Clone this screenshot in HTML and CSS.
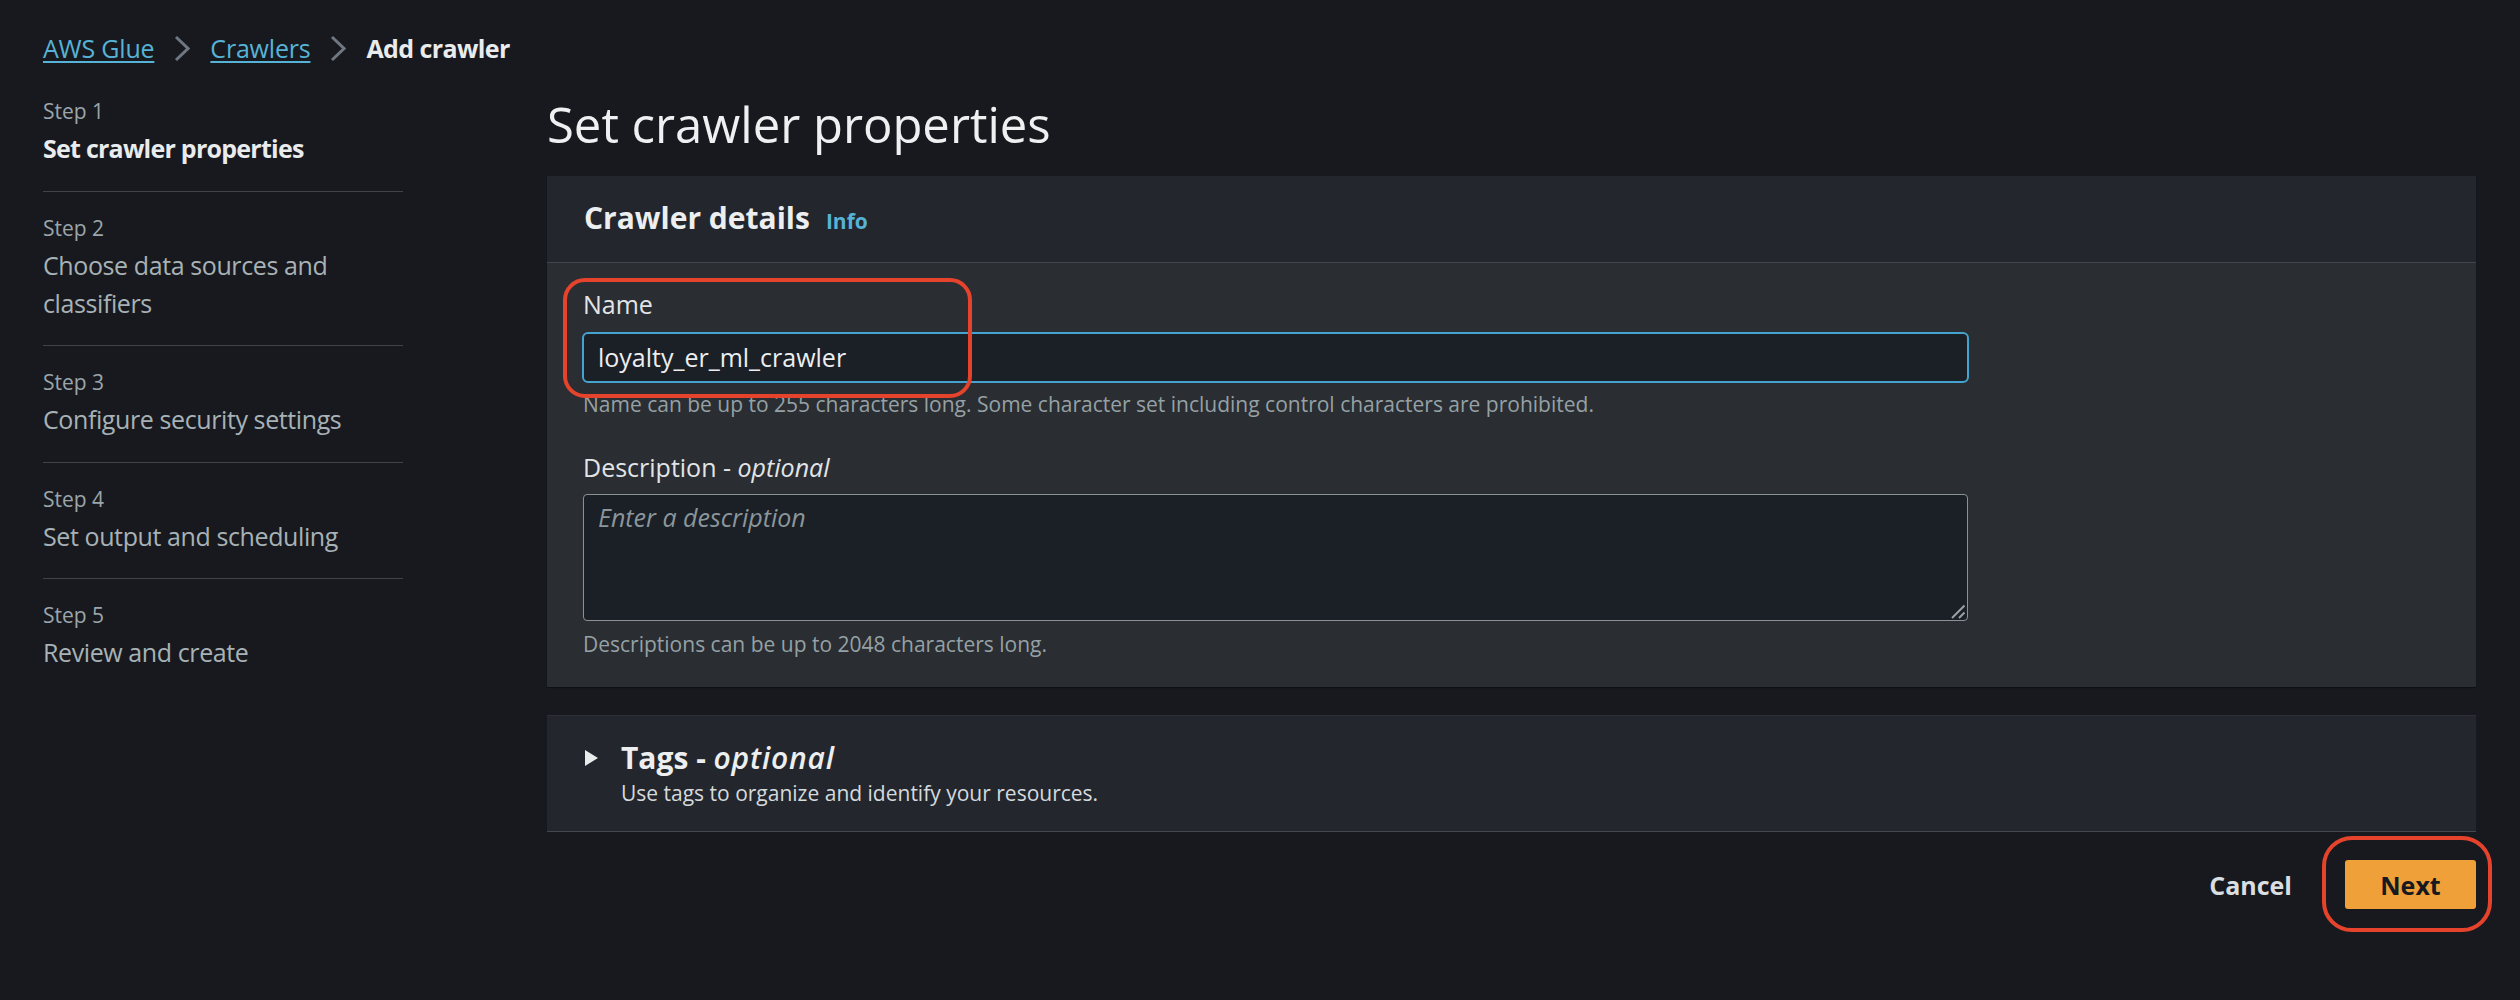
FILE: index.html
```html
<!DOCTYPE html>
<html lang="en">
<head>
<meta charset="utf-8">
<title>Add crawler - AWS Glue</title>
<link rel="stylesheet" href="styles.css">
</head>
<body>
<div class="page">
  <nav class="breadcrumbs">
    <a class="crumb-link" href="#">AWS Glue</a>
    <svg class="chev" width="16" height="27" viewBox="0 0 16 27"><polyline points="2,2 14,13.5 2,25" fill="none" stroke="#6f7782" stroke-width="3"/></svg>
    <a class="crumb-link" href="#">Crawlers</a>
    <svg class="chev" width="16" height="27" viewBox="0 0 16 27"><polyline points="2,2 14,13.5 2,25" fill="none" stroke="#6f7782" stroke-width="3"/></svg>
    <span class="crumb-current">Add crawler</span>
  </nav>

  <div class="layout">
    <aside class="steps">
      <div class="step">
        <div class="step-label">Step 1</div>
        <div class="step-title active">Set crawler properties</div>
      </div>
      <div class="step">
        <div class="step-label">Step 2</div>
        <div class="step-title">Choose data sources and<br>classifiers</div>
      </div>
      <div class="step">
        <div class="step-label">Step 3</div>
        <div class="step-title">Configure security settings</div>
      </div>
      <div class="step">
        <div class="step-label">Step 4</div>
        <div class="step-title">Set output and scheduling</div>
      </div>
      <div class="step last">
        <div class="step-label">Step 5</div>
        <div class="step-title">Review and create</div>
      </div>
    </aside>

    <main class="content">
      <h1 class="page-title">Set crawler properties</h1>

      <section class="panel details">
        <header class="panel-header">
          <h2 class="panel-title">Crawler details</h2>
          <a class="info-link" href="#">Info</a>
        </header>
        <div class="panel-body">
          <div class="field">
            <div class="field-label">Name</div>
            <div class="text-input">loyalty_er_ml_crawler</div>
            <div class="hint">Name can be up to 255 characters long. Some character set including control characters are prohibited.</div>
          </div>
          <div class="field desc-field">
            <div class="field-label">Description - <em>optional</em></div>
            <div class="text-area">
              <span class="placeholder">Enter a description</span>
              <svg class="resize-grip" width="16" height="16" viewBox="0 0 16 16"><line x1="2" y1="15" x2="14.5" y2="2.5" stroke="#9ba1a6" stroke-width="2"/><line x1="9" y1="15" x2="14.5" y2="9.5" stroke="#9ba1a6" stroke-width="2"/></svg>
            </div>
            <div class="hint">Descriptions can be up to 2048 characters long.</div>
          </div>
          <div class="annot annot-name"></div>
        </div>
      </section>

      <section class="panel tags">
        <svg class="caret" width="13" height="16" viewBox="0 0 13 16"><polygon points="0,0 13,8 0,16" fill="#e9ebed"/></svg>
        <div class="tags-text">
          <h2 class="panel-title tags-title">Tags - <em>optional</em></h2>
          <div class="tags-desc">Use tags to organize and identify your resources.</div>
        </div>
      </section>

      <div class="actions">
        <button class="btn-link" type="button">Cancel</button>
        <div class="next-wrap">
          <button class="btn-primary" type="button">Next</button>
          <div class="annot annot-next"></div>
        </div>
      </div>
    </main>
  </div>
</div>
</body>
</html>
```

FILE: styles.css
```css
* { box-sizing: border-box; }

html, body {
  margin: 0;
  padding: 0;
  background: #18191e;
}

body {
  font-family: "Open Sans", "Noto Sans", "Liberation Sans", sans-serif;
  color: #e9ebed;
}

.page {
  padding: 30px 44px 0 43px;
  min-height: 1000px;
}

/* Breadcrumbs */
.breadcrumbs {
  display: flex;
  align-items: center;
  height: 36px;
  font-size: 25px;
  line-height: 36px;
  letter-spacing: -0.2px;
}

.crumb-link {
  color: #56b3d6;
  text-decoration: underline;
  text-underline-offset: 3px;
  text-decoration-thickness: 2px;
}

.chev {
  margin: 0 20px;
  flex: none;
}

.crumb-current {
  font-weight: 700;
  letter-spacing: -0.6px;
  color: #e9ebed;
}

/* Layout */
.layout {
  display: grid;
  grid-template-columns: 360px 1fr;
  column-gap: 144px;
  margin-top: 30px;
}

/* Steps sidebar */
.step {
  padding: 21px 0 23.5px;
  border-bottom: 1px solid #3f434a;
}

.step:first-child { padding-top: 0; }
.step.last { border-bottom: none; }

.step-label {
  font-size: 21px;
  line-height: 30px;
  color: #9aa6aa;
}

.step-title {
  margin-top: 3px;
  font-size: 25px;
  line-height: 38px;
  letter-spacing: -0.4px;
  color: #a7b2b6;
}

.step-title.active {
  font-weight: 700;
  letter-spacing: -0.75px;
  color: #e9ebed;
}

/* Main content */
.page-title {
  margin: 0 0 24px;
  font-size: 49px;
  line-height: 56px;
  font-weight: 400;
  color: #eef0f1;
}

.panel {
  background: #2a2d32;
  box-shadow: 0 1px 1px rgba(0, 0, 0, 0.35);
}

.panel-header {
  display: flex;
  align-items: baseline;
  padding: 24px 37px 26px;
  background: #23262d;
  border-bottom: 1px solid #41454c;
}

.panel-title {
  margin: 0;
  font-size: 30px;
  line-height: 36px;
  font-weight: 700;
  color: #eceeef;
}

.tags-title em {
  font-weight: 600;
  letter-spacing: 0.8px;
}

.info-link {
  margin-left: 16px;
  font-size: 21px;
  font-weight: 700;
  color: #56b3d6;
  text-decoration: none;
}

.panel-body {
  position: relative;
  padding: 23px 36px 28px;
}

.field {
  width: 1385px;
}

.desc-field { margin-top: 30px; }

.field-label {
  font-size: 25px;
  line-height: 36px;
  color: #e2e5e7;
}

.field-label em { font-style: italic; }

.text-input {
  margin: 10px -1px 0;
  height: 51px;
  padding: 0 14px;
  border: 2px solid #44a3cf;
  border-radius: 6px;
  background: #1b1f26;
  font-size: 25px;
  line-height: 47px;
  color: #eceeef;
}

.hint {
  margin-top: 6px;
  font-size: 21px;
  line-height: 30px;
  color: #95a1a5;
}

.desc-field .hint { margin-top: 8px; }

.text-area {
  position: relative;
  margin-top: 9px;
  height: 127px;
  padding: 4px 14px;
  border: 1px solid #8b9297;
  border-radius: 4px;
  background: #1b1f26;
  font-size: 25px;
  line-height: 36px;
}

.placeholder {
  font-style: italic;
  color: #8a969b;
}

.resize-grip {
  position: absolute;
  right: 1px;
  bottom: 1px;
}

/* Tags panel */
.panel.tags {
  display: flex;
  align-items: flex-start;
  margin-top: 28px;
  padding: 24px 38px 24px 38px;
  background: #23262d;
  border-top: 1px solid #2c2f36;
  box-shadow: 0 1px 0 #43474e;
  height: 116px;
}

.caret {
  flex: none;
  margin-top: 10px;
  margin-right: 23px;
}

.tags-desc {
  margin-top: 2px;
  font-size: 21px;
  line-height: 30px;
  color: #d5dadd;
}

/* Actions */
.actions {
  display: flex;
  justify-content: flex-end;
  align-items: center;
  margin-top: 29px;
}

.btn-link {
  margin-right: 16px;
  padding: 0 37px;
  height: 49px;
  border: none;
  background: transparent;
  font-family: inherit;
  font-size: 25px;
  font-weight: 700;
  color: #d9dee0;
}

.next-wrap {
  position: relative;
}

.btn-primary {
  display: block;
  width: 131px;
  height: 49px;
  border: none;
  border-radius: 3px;
  background: #f0a039;
  font-family: inherit;
  font-size: 25px;
  font-weight: 700;
  color: #16191f;
}

/* Annotations (red highlight boxes drawn over the screenshot) */
.annot {
  position: absolute;
  border: 4px solid #e5432b;
  pointer-events: none;
}

.annot-name {
  left: 16px;
  top: 15px;
  width: 409px;
  height: 120px;
  border-radius: 22px;
}

.annot-next {
  left: -23px;
  top: -24px;
  width: 170px;
  height: 96px;
  border-radius: 30px;
}
```
